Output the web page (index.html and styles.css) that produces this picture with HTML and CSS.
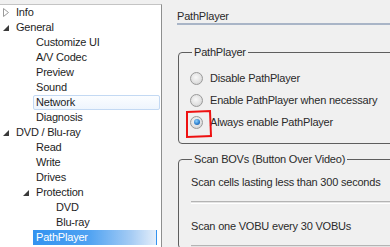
FILE: index.html
```html
<!DOCTYPE html>
<html>
  <head>
    <meta charset="UTF-8">
    <title>PathPlayer settings</title>
    <link rel="stylesheet" href="styles.css">
  </head>
  <body>
    <div class="tree">
      <div class="node l0"><span class="exp"><svg width="6" height="9"><path d="M0.5 0.5 L5.5 4.5 L0.5 8.5 Z" fill="none" stroke="#9a9a9a"/></svg></span><span class="label">Info</span></div>
      <div class="node l0"><span class="exp"><svg width="6" height="6"><path d="M6 0 L6 6 L0 6 Z" fill="#3a3a3a"/></svg></span><span class="label">General</span></div>
      <div class="node l1"><span class="exp"></span><span class="label">Customize UI</span></div>
      <div class="node l1"><span class="exp"></span><span class="label">A/V Codec</span></div>
      <div class="node l1"><span class="exp"></span><span class="label">Preview</span></div>
      <div class="node l1"><span class="exp"></span><span class="label">Sound</span></div>
      <div class="node l1"><span class="exp"></span><span class="label hover">Network</span></div>
      <div class="node l1"><span class="exp"></span><span class="label">Diagnosis</span></div>
      <div class="node l0"><span class="exp"><svg width="6" height="6"><path d="M6 0 L6 6 L0 6 Z" fill="#3a3a3a"/></svg></span><span class="label">DVD / Blu-ray</span></div>
      <div class="node l1"><span class="exp"></span><span class="label">Read</span></div>
      <div class="node l1"><span class="exp"></span><span class="label">Write</span></div>
      <div class="node l1"><span class="exp"></span><span class="label">Drives</span></div>
      <div class="node l1"><span class="exp"><svg width="6" height="6"><path d="M6 0 L6 6 L0 6 Z" fill="#3a3a3a"/></svg></span><span class="label">Protection</span></div>
      <div class="node l2"><span class="exp"></span><span class="label">DVD</span></div>
      <div class="node l2"><span class="exp"></span><span class="label">Blu-ray</span></div>
      <div class="node l1"><span class="exp"></span><span class="label selected">PathPlayer</span></div>
    </div>

    <div class="panel">
      <div class="header">PathPlayer</div>

      <fieldset class="group first">
        <legend>PathPlayer</legend>
        <div class="option"><span class="radio"></span>Disable PathPlayer</div>
        <div class="option"><span class="radio"></span>Enable PathPlayer when necessary</div>
        <div class="option"><span class="radio checked"></span>Always enable PathPlayer</div>
      </fieldset>

      <fieldset class="group second">
        <legend>Scan BOVs (Button Over Video)</legend>
        <div class="setting">Scan cells lasting less than 300 seconds</div>
        <div class="track"></div>
        <div class="setting">Scan one VOBU every 30 VOBUs</div>
        <div class="track last"></div>
      </fieldset>
    </div>

    <!-- red annotation drawn over the screenshot -->
    <svg class="mark" width="30" height="30">
      <path d="M3 3 L26 2 L27 27 M3 2 L3 28 L28 27" fill="none" stroke="#ee1111" stroke-width="2"/>
    </svg>
  </body>
</html>
```

FILE: styles.css
```css
body{
    margin:0;
    width:390px;
    height:247px;
    overflow:hidden;
    display:flex;
    background:#f0f0f0;
    font-family:"Liberation Sans", Arial, sans-serif;
    font-size:11px;
    letter-spacing:-0.2px;
    color:#1e1e1e;
    position:relative;
}
.tree{
    flex:none;
    width:161px;
    margin-top:4px;
    background:#fff;
    border-top:1px solid #c4c4c4;
    border-right:1px solid #8e8f8f;
}
.node{
    display:flex;
    height:15px;
}
.l1{
    padding-left:20px;
}
.l2{
    padding-left:40px;
}
.exp{
    flex:none;
    width:13px;
    display:flex;
    align-items:center;
    padding-left:3px;
    box-sizing:border-box;
}
.label{
    padding:0 2px;
    line-height:13px;
    border:1px solid transparent;
    border-left:none;
    padding-left:3px;
    white-space:nowrap;
}
.label.hover{
    flex:1;
    margin-right:1px;
    border:1px solid #c3d9f3;
    border-radius:2px;
    padding-left:2px;
    background:linear-gradient(#fbfdff,#eef5fd);
}
.label.selected{
    flex:1;
    margin-right:4px;
    color:#fff;
    background:linear-gradient(90deg,#3393f0 0%,#4ea2f2 45%,#a6ccf4 80%,#e4eefa 100%);
}
.panel{
    flex:1;
    min-width:0;
    height:247px;
    overflow:hidden;
}
.header{
    margin:9px 0 0 15px;
    line-height:14px;
    border-bottom:2px solid #a9b5c7;
    color:#2a2a2a;
}
.group{
    margin:0 0 0 16px;
    border:1px solid #5e5e5e;
    border-radius:4px;
    min-width:0;
    width:360px;
}
.group legend{
    padding:0 2px;
    line-height:14px;
    color:#2a2a2a;
}
.first{
    margin-top:20px;
    padding:8px 0 10px 11px;
}
.first legend{
    margin-left:2px;
}
.second{
    margin-top:8px;
    padding:9px 0 0 12px;
}
.second legend{
    margin-left:1px;
}
.option{
    display:flex;
    align-items:center;
    height:22px;
    color:#2a2a2a;
}
.radio{
    flex:none;
    width:11px;
    height:11px;
    margin-right:7px;
    border:1px solid #9a9a9a;
    border-radius:50%;
    background:radial-gradient(circle at 45% 40%,#f8f8f8 0%,#e2e2e2 55%,#c8c8c8 100%);
    display:flex;
    align-items:center;
    justify-content:center;
}
.radio.checked::after{
    content:"";
    width:6px;
    height:6px;
    border-radius:50%;
    background:radial-gradient(circle at 40% 35%,#8fd3ff 0%,#2a7ccc 60%,#174f88 100%);
}
.setting{
    line-height:14px;
    color:#2a2a2a;
}
.track{
    height:1px;
    margin:12px 0 15px;
    background:#e4e4e4;
    border-top:1px solid #b4b4b4;
    border-bottom:1px solid #fff;
}
.track.last{
    margin-bottom:0;
}
.mark{
    position:absolute;
    left:184px;
    top:109px;
}
```
